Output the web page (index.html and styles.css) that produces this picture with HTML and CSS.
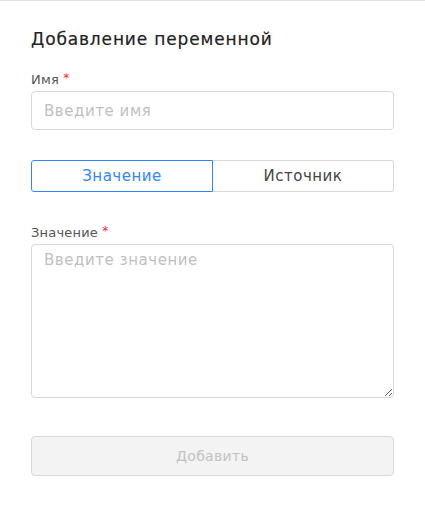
FILE: index.html
```html
<!DOCTYPE html>
<html lang="ru">
<head>
  <meta charset="UTF-8">
  <meta name="viewport" content="width=device-width, initial-scale=1.0">
  <title>Добавление переменной</title>
  <link rel="stylesheet" href="styles.css">
</head>
<body>
  <div class="panel">
    <h1 class="title">Добавление переменной</h1>

    <div class="field">
      <label class="label" for="varName">Имя <span class="req">*</span></label>
      <input type="text" id="varName" class="input" placeholder="Введите имя">
    </div>

    <!-- Value / source switch -->
    <div class="tabs">
      <button class="tab active">Значение</button>
      <button class="tab">Источник</button>
    </div>

    <div class="field">
      <label class="label" for="varValue">Значение <span class="req">*</span></label>
      <textarea id="varValue" class="input area" placeholder="Введите значение"></textarea>
    </div>

    <button class="submit" disabled>Добавить</button>
  </div>
</body>
</html>
```

FILE: styles.css
```css
body {
  margin: 0;
  font-family: "DejaVu Sans", sans-serif;
  background: white;
  border-top: 1px solid #e2e2e2;
}

.panel {
  width: 363px;
  padding: 26px 31px 0 31px;
}

.title {
  margin: 0 0 21px;
  font-size: 17px;
  font-weight: 400;
  color: #222;
  line-height: 24px;
  letter-spacing: 0.85px;
  -webkit-text-stroke: 0.2px #222;
}

.field {
  display: flex;
  flex-direction: column;
  gap: 3px;
}

.label {
  font-size: 13px;
  color: #555;
  line-height: 16px;
  letter-spacing: 0.2px;
}

.req {
  color: #f5222d;
  font-size: 12px;
  line-height: 0;
  position: relative;
  top: -2px;
}

.input {
  box-sizing: border-box;
  width: 100%;
  height: 39px;
  padding: 0 12px;
  font-family: inherit;
  font-size: 15px;
  letter-spacing: 0.55px;
  color: #333;
  border: 1px solid #d9d9d9;
  border-radius: 4px;
  outline: none;
}

.input::placeholder {
  color: #bfbfbf;
}

.area {
  height: 154px;
  padding: 6px 12px;
  resize: vertical;
}

.tabs {
  display: flex;
  margin: 30px 0 33px;
}

.tab {
  flex: 1;
  height: 32px;
  font-family: inherit;
  font-size: 15px;
  letter-spacing: 0.5px;
  color: #444;
  background: white;
  border: 1px solid #d9d9d9;
  cursor: pointer;
}

.tab:first-child {
  border-radius: 3px 0 0 3px;
}

.tab:last-child {
  border-left: none;
  border-radius: 0 3px 3px 0;
}

.tab.active {
  color: #2f86ff;
  border-color: #2f86ff;
}

.submit {
  display: block;
  width: 100%;
  height: 40px;
  margin-top: 38px;
  font-family: inherit;
  font-size: 14px;
  letter-spacing: 0.3px;
  color: #c2c2c2;
  background: #f3f3f3;
  border: 1px solid #d9d9d9;
  border-radius: 4px;
}
```
